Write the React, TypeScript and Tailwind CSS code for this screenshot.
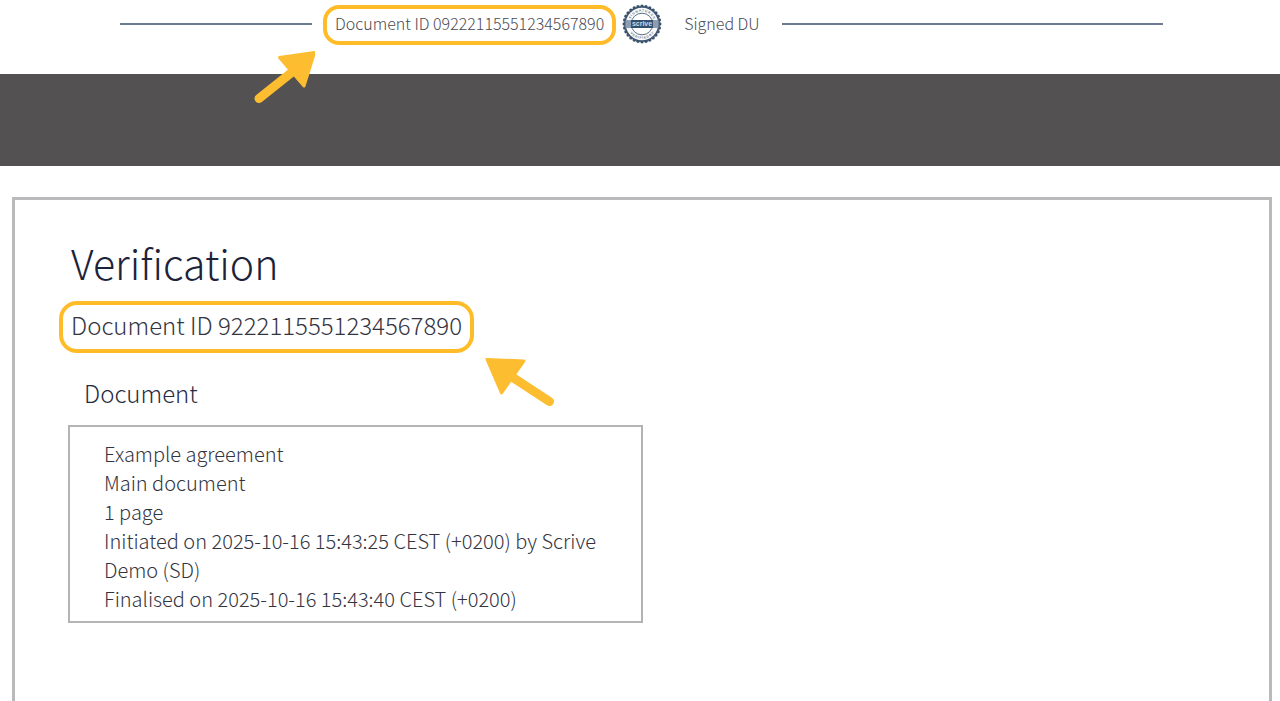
import type { ReactNode } from "react";

function Highlight({ className, children }: { className: string; children: ReactNode }) {
  return <div className={`flex w-fit border-4 border-[#ffbc28] ${className}`}>{children}</div>;
}

function ScriveSeal() {
  const teeth = Array.from({ length: 28 }, (_, i) => {
    const a = (i * 2 * Math.PI) / 28;
    return <circle key={i} cx={20 + 17.8 * Math.cos(a)} cy={20 + 17.8 * Math.sin(a)} r="1.7" />;
  });
  return (
    <svg viewBox="0 0 40 40" className="size-10 shrink-0" role="img" aria-label="Scrive seal">
      <defs>
        <path id="seal-top" d="M7.500 20a12.500 12.500 0 0 1 25 0" />
        <path id="seal-bottom" d="M5.200 20a14.800 14.800 0 0 0 29.600 0" />
      </defs>
      <g fill="#3c526d">{teeth}</g>
      <circle cx="20" cy="20" r="17.8" fill="#3c526d" />
      <circle cx="20" cy="20" r="16.2" fill="#f8f9fb" />
      <circle cx="20" cy="20" r="10.8" fill="#fff" stroke="#5d7088" strokeWidth="1" />
      <g fill="#6b7c91" fontFamily="Liberation Sans, sans-serif" fontSize="3.2" fontWeight="700" textAnchor="middle">
        <text><textPath href="#seal-top" startOffset="50%">S I G N A T U R E S</textPath></text>
        <text><textPath href="#seal-bottom" startOffset="50%">V E R I F I E D  B Y</textPath></text>
      </g>
      <rect x="3.500" y="16" width="33" height="8" fill="#8f9db0" />
      <rect x="9" y="16" width="22" height="8" fill="#34506f" />
      <text x="20" y="22" fill="#cfd8e3" fontFamily="Liberation Sans, sans-serif" fontSize="7" fontWeight="700" textAnchor="middle">scrive</text>
    </svg>
  );
}

function ArrowUpRight() {
  return (
    <svg viewBox="0 0 64 56" className="absolute top-11 -left-18 h-14 w-16" aria-hidden="true">
      <g fill="#fdbd30" stroke="#fdbd30" strokeLinecap="round" strokeLinejoin="round">
        <path d="M63.500 4.500 28.500 9.500 53 38Z" strokeWidth="3" />
        <path d="M8 50.500 45 21" strokeWidth="9" />
      </g>
    </svg>
  );
}

function ArrowUpLeft() {
  return (
    <svg viewBox="0 0 70 50" className="absolute top-14 left-full ml-[10px] h-[50px] w-[70px]" aria-hidden="true">
      <g fill="#fdbd30" stroke="#fdbd30" strokeLinecap="round" strokeLinejoin="round">
        <path d="M3 2.500 40 4 17.500 36Z" strokeWidth="3" />
        <path d="M65.500 44.500 22 16" strokeWidth="9" />
      </g>
    </svg>
  );
}

const details = [
  "Example agreement",
  "Main document",
  "1 page",
  "Initiated on 2025-10-16 15:43:25 CEST (+0200) by Scrive Demo (SD)",
  "Finalised on 2025-10-16 15:43:40 CEST (+0200)",
];

export default function App() {
  return (
    <div className="flex min-h-screen flex-col bg-white font-['Noto_Sans_CJK_SC','Noto_Sans',sans-serif] font-light text-[#34343f]">
      <header className="flex h-[74px] shrink-0 items-start pt-1 pr-[117px] pl-[120px]">
        <div className="mt-[19px] h-[2px] w-48 shrink-0 bg-[#6a7b92]" />
        <div className="relative ml-[11px] shrink-0">
          <Highlight className="mt-px h-10 rounded-[16px] px-2 text-[16px] leading-7 whitespace-nowrap text-[#4a4a54]">
            Document ID 09222115551234567890
          </Highlight>
          <ArrowUpRight />
        </div>
        <div className="ml-[6px] shrink-0">
          <ScriveSeal />
        </div>
        <p className="ml-[22px] shrink-0 text-[16px] leading-[38px] whitespace-nowrap text-[#4a4a54]">Signed DU</p>
        <div className="mt-[19px] ml-[22px] h-[2px] flex-1 bg-[#6a7b92]" />
      </header>
      <div className="h-[92px] shrink-0 bg-[#545152]" />
      <main className="mt-[31px] mr-2 ml-3 flex-1 border-3 border-b-0 border-[#bababc] pt-8 pl-11">
        <h1 className="ml-3 text-[41px] leading-[60px] text-[#1c2338]">Verification</h1>
        <div className="relative mt-[9px] w-fit">
          <Highlight className="h-[52px] rounded-[18px] px-2 text-[24px] leading-10 whitespace-nowrap">
            Document ID 9222115551234567890
          </Highlight>
          <ArrowUpLeft />
        </div>
        <section className="ml-[9px]">
          <h2 className="mt-[22px] ml-4 text-[24px] leading-9 text-[#262c3f]">Document</h2>
          <div className="mt-[14px] w-[575px] max-w-full border-2 border-[#b4b4b6] px-[34px] pt-3 pb-2 text-[20px] leading-[29px]">
            {details.map((line) => (
              <p key={line}>{line}</p>
            ))}
          </div>
        </section>
      </main>
    </div>
  );
}
